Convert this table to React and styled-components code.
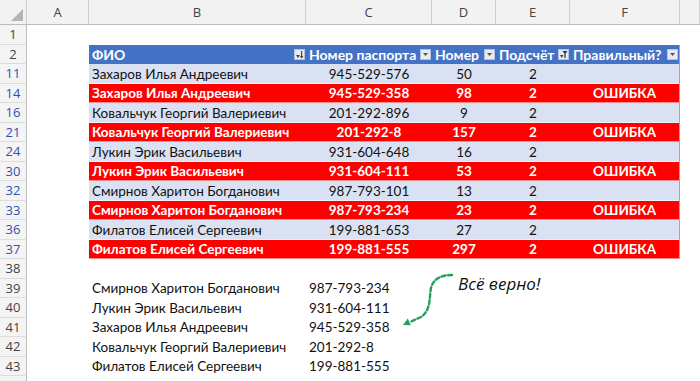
import styled, { createGlobalStyle } from "styled-components";

const GlobalStyle = createGlobalStyle`
  html, body {
    margin: 0;
    padding: 0;
    background: #fff;
  }
  body {
    font-family: Lato, "Noto Sans", sans-serif;
    overflow: hidden;
  }
`;

const COLS = "27px 62px 217px 126px 64px 74px 110px 1fr";

const tableRows = [
  [11, "Захаров Илья Андреевич", "945-529-576", 50, 2, ""],
  [14, "Захаров Илья Андреевич", "945-529-358", 98, 2, "ОШИБКА"],
  [16, "Ковальчук Георгий Валериевич", "201-292-896", 9, 2, ""],
  [21, "Ковальчук Георгий Валериевич", "201-292-8", 157, 2, "ОШИБКА"],
  [24, "Лукин Эрик Васильевич", "931-604-648", 16, 2, ""],
  [30, "Лукин Эрик Васильевич", "931-604-111", 53, 2, "ОШИБКА"],
  [32, "Смирнов Харитон Богданович", "987-793-101", 13, 2, ""],
  [33, "Смирнов Харитон Богданович", "987-793-234", 23, 2, "ОШИБКА"],
  [36, "Филатов Елисей Сергеевич", "199-881-653", 27, 2, ""],
  [37, "Филатов Елисей Сергеевич", "199-881-555", 297, 2, "ОШИБКА"],
];

const checkRows = [
  [39, "Смирнов Харитон Богданович", "987-793-234"],
  [40, "Лукин Эрик Васильевич", "931-604-111"],
  [41, "Захаров Илья Андреевич", "945-529-358"],
  [42, "Ковальчук Георгий Валериевич", "201-292-8"],
  [43, "Филатов Елисей Сергеевич", "199-881-555"],
];

export default function App() {
  return (
    <>
      <GlobalStyle />
      <Sheet>
        <HeaderRow>
          <Corner />
          {["A", "B", "C", "D", "E", "F", ""].map((l, i) => (
            <ColLetter key={i}>{l}</ColLetter>
          ))}
        </HeaderRow>

        <Row>
          <RowNum>1</RowNum>
        </Row>

        <Row>
          <RowNum>2</RowNum>
          <Cell />
          <HeadCell>
            ФИО
            <FilterBtn><SortIcon /></FilterBtn>
          </HeadCell>
          <HeadCell>
            Номер паспорта
            <FilterBtn><DropIcon /></FilterBtn>
          </HeadCell>
          <HeadCell>
            Номер
            <FilterBtn><DropIcon /></FilterBtn>
          </HeadCell>
          <HeadCell>
            Подсчёт
            <FilterBtn><FunnelIcon /></FilterBtn>
          </HeadCell>
          <HeadCell $last>
            Правильный?
            <FilterBtn><DropIcon /></FilterBtn>
          </HeadCell>
        </Row>

        {tableRows.map(([n, name, pass, num, cnt, ok]) => {
          const err = ok !== "";
          return (
            <Row key={n}>
              <RowNum $filtered>{n}</RowNum>
              <Cell />
              <DataCell $err={err}>{name}</DataCell>
              <DataCell $err={err} $align="center">{pass}</DataCell>
              <DataCell $err={err} $align="center">{num}</DataCell>
              <DataCell $err={err} $align="center">{cnt}</DataCell>
              <DataCell $err={err} $align="center" $last>{ok}</DataCell>
            </Row>
          );
        })}

        <Row>
          <RowNum>38</RowNum>
        </Row>

        {checkRows.map(([n, name, pass]) => (
          <Row key={n}>
            <RowNum>{n}</RowNum>
            <Cell />
            <Cell>{name}</Cell>
            <Cell>{pass}</Cell>
          </Row>
        ))}

        <Row>
          <RowNum />
        </Row>

        <Note>
          <svg width="60" height="60" viewBox="400 280 60 60">
            <path
              d="M452 283 C441 283 433 287 431 296 C429 307 431 318 421 325 L410 330"
              fill="none"
              stroke="#23a15a"
              strokeWidth="2.4"
              strokeDasharray="4 2.5"
              strokeLinecap="round"
            />
            <polygon points="403,333 410.8,333.2 407.8,326.6" fill="#23a15a" />
          </svg>
          <NoteText>Всё верно!</NoteText>
        </Note>
      </Sheet>
    </>
  );
}

function DropIcon() {
  return (
    <svg width="7" height="5" viewBox="0 0 7 5">
      <polygon points="1,1 6,1 3.5,4" fill="#555" />
    </svg>
  );
}

function SortIcon() {
  return (
    <svg width="9" height="9" viewBox="0 0 9 9">
      <polygon points="1,5 5,5 3,8" fill="#444" />
      <rect x="6" y="1" width="1.2" height="7" fill="#444" />
      <polygon points="4.8,6 8.4,6 6.6,8.4" fill="#444" />
    </svg>
  );
}

function FunnelIcon() {
  return (
    <svg width="9" height="9" viewBox="0 0 9 9">
      <polygon points="1,5 4.5,5 2.75,8" fill="#444" />
      <polygon points="3.5,1 8.5,1 6.6,3.6 6.6,8 5.4,8 5.4,3.6" fill="#333" />
    </svg>
  );
}

const Sheet = styled.div`
  position: relative;
  width: 700px;
  height: 381px;
  overflow: hidden;
  background: #fff;
`;

const HeaderRow = styled.div`
  display: grid;
  grid-template-columns: ${COLS};
  height: 25px;
  background: #f2f2f2;
  border-bottom: 1px solid #bdbdbd;
  box-sizing: border-box;
`;

const Corner = styled.div`
  position: relative;
  border-right: 1px solid #cfcfcf;

  &::after {
    content: "";
    position: absolute;
    right: 3px;
    bottom: 3px;
    border-style: solid;
    border-width: 0 0 12px 12px;
    border-color: transparent transparent #b4b4b4 transparent;
  }
`;

const ColLetter = styled.div`
  display: flex;
  align-items: center;
  justify-content: center;
  border-right: 1px solid #cfcfcf;
  color: #444;
  font-family: "Open Sans", "Noto Sans", sans-serif;
  font-size: 13px;
`;

const Row = styled.div`
  display: grid;
  grid-template-columns: ${COLS};
  height: 19.5px;
  font-size: 13.5px;
  color: #111;
`;

const RowNum = styled.div`
  display: flex;
  align-items: center;
  justify-content: center;
  background: #f4f4f4;
  border-right: 1px solid #bdbdbd;
  border-bottom: 1px solid #dcdcdc;
  box-sizing: border-box;
  color: ${(p) => (p.$filtered ? "#2f52b0" : "#444")};
  font-family: "Open Sans", "Noto Sans", sans-serif;
  font-size: 13px;
`;

const Cell = styled.div`
  display: flex;
  align-items: center;
  justify-content: ${(p) => (p.$align === "center" ? "center" : "flex-start")};
  padding: 0 3px;
  white-space: nowrap;
  overflow: hidden;
`;

const HeadCell = styled(Cell)`
  justify-content: space-between;
  padding-right: 1px;
  background: #4472c4;
  color: #fff;
  font-weight: 700;
  font-size: 14px;
  border-right: ${(p) => (p.$last ? "1px solid #8ea9db" : "none")};
`;

const DataCell = styled(Cell)`
  background: ${(p) => (p.$err ? "#ff0000" : "#d9e1f2")};
  color: ${(p) => (p.$err ? "#fff" : "#111")};
  font-weight: ${(p) => (p.$err ? 700 : 400)};
  box-shadow: inset 0 -1px 0 rgba(255, 255, 255, 0.55);
  border-right: ${(p) => (p.$last ? "1px solid #8ea9db" : "none")};
`;

const FilterBtn = styled.span`
  display: flex;
  align-items: center;
  justify-content: center;
  width: 11px;
  height: 11px;
  flex-shrink: 0;
  background: #e8ebf2;
  border: 1px solid #b7c2d9;
  box-sizing: border-box;
`;

const Note = styled.div`
  position: absolute;
  left: 400px;
  top: 272px;
  display: flex;
  align-items: flex-start;
`;

const NoteText = styled.span`
  margin: 0 0 0 -2px;
  font-family: "Open Sans", "Noto Sans", sans-serif;
  font-style: italic;
  font-size: 17px;
  color: #111;
  white-space: nowrap;
`;
